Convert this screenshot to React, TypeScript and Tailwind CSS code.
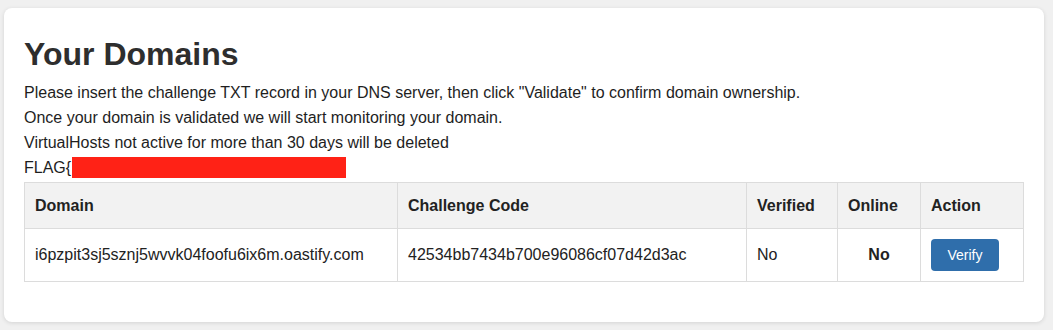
const domains = [
  {
    domain: "i6pzpit3sj5sznj5wvvk04foofu6ix6m.oastify.com",
    code: "42534bb7434b700e96086cf07d42d3ac",
    verified: "No",
    online: "No",
  },
]

export default function App() {
  return (
    <div className="min-h-[330px] bg-[#f0f0f0] pt-[8px] pl-[4px] font-['Liberation_Sans',Arial,sans-serif]">
      <div className="w-[1040px] h-[314px] bg-white rounded-[8px] shadow-[0_1px_4px_rgba(0,0,0,0.12)] pt-[28px] pl-[20px] pr-[21px]">
        <h1 className="text-[32px] leading-[36px] font-bold text-[#2e2e2e]">Your Domains</h1>
        <div className="mt-[8px] text-[16px] leading-[25px] text-[#1e1e1e]">
          <p>Please insert the challenge TXT record in your DNS server, then click "Validate" to confirm domain ownership.</p>
          <p>Once your domain is validated we will start monitoring your domain.</p>
          <p>VirtualHosts not active for more than 30 days will be deleted</p>
          <p className="flex items-center">
            FLAG{"{"}
            <span className="ml-[1px] inline-block w-[274px] h-[21px] bg-[#ff2216]" />
          </p>
        </div>
        <table className="mt-[2px] w-[999px] table-fixed border-collapse text-[16px] text-[#222]">
          <colgroup>
            <col className="w-[373px]" />
            <col className="w-[349px]" />
            <col className="w-[91px]" />
            <col className="w-[83px]" />
            <col className="w-[103px]" />
          </colgroup>
          <thead>
            <tr className="bg-[#f2f2f2] h-[46px]">
              <th className="border border-[#dcdcdc] px-[10px] text-left font-bold">Domain</th>
              <th className="border border-[#dcdcdc] px-[10px] text-left font-bold">Challenge Code</th>
              <th className="border border-[#dcdcdc] px-[10px] text-left font-bold">Verified</th>
              <th className="border border-[#dcdcdc] px-[10px] text-left font-bold">Online</th>
              <th className="border border-[#dcdcdc] px-[10px] text-left font-bold">Action</th>
            </tr>
          </thead>
          <tbody>
            {domains.map((d) => (
              <tr key={d.domain} className="h-[53px]">
                <td className="border border-[#dcdcdc] px-[10px]">{d.domain}</td>
                <td className="border border-[#dcdcdc] px-[10px]">{d.code}</td>
                <td className="border border-[#dcdcdc] px-[10px]">{d.verified}</td>
                <td className="border border-[#dcdcdc] px-[10px] text-center font-bold">{d.online}</td>
                <td className="border border-[#dcdcdc] px-[10px]">
                  <button className="w-[68px] h-[32px] rounded-[4px] bg-[#2f6eab] text-white text-[14px]">
                    Verify
                  </button>
                </td>
              </tr>
            ))}
          </tbody>
        </table>
      </div>
    </div>
  )
}
